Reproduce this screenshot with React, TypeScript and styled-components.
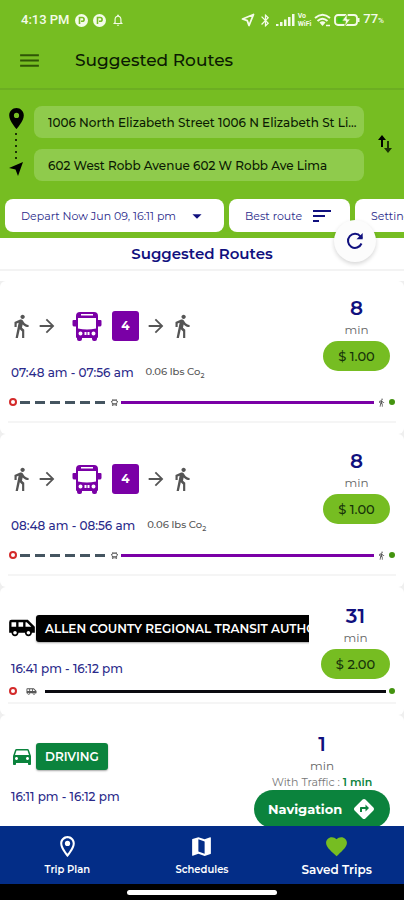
import React from "react";
import styled, { createGlobalStyle } from "styled-components";
import {
  MdAirportShuttle,
  MdArrowDropDown,
  MdArrowForward,
  MdBluetooth,
  MdDirections,
  MdDirectionsCar,
  MdDirectionsWalk,
  MdFavorite,
  MdLocationOn,
  MdMap,
  MdMenu,
  MdOutlineLocationOn,
  MdOutlineNotifications,
  MdSort,
} from "react-icons/md";

const color = {
  green: "#76bd22",
  greenLine: "#6cae22",
  field: "#8fcb4c",
  navy: "#10107e",
  bar: "#032d87",
  purple: "#7a00a6",
  drive: "#0b833d",
  grey: "#666",
  ink: "#0b1a02",
};

const GlobalStyle = createGlobalStyle`
  *, *::before, *::after { box-sizing: border-box; }
  body {
    margin: 0;
    background: #fff;
    font-family: Montserrat, Inter, sans-serif;
    color: ${color.navy};
  }
  button, input { font: inherit; color: inherit; border: 0; margin: 0; padding: 0; background: none; }
  button { cursor: pointer; }
  h1, h2, p { margin: 0; }
  svg { display: block; flex: none; }
`;

const Screen = styled.div`
  display: flex;
  flex-direction: column;
  height: 100vh;
  overflow: hidden;
`;

const Top = styled.header`
  flex: none;
  background: ${color.green};
  color: ${color.ink};
`;

const StatusBar = styled.div`
  display: flex;
  align-items: center;
  justify-content: space-between;
  height: 40px;
  padding: 0 20px 0 21px;
  color: #f4fbe9;
  font: 500 13px/16px Roboto, sans-serif;
`;

const StatusGroup = styled.div<{ $gap: number }>`
  display: flex;
  align-items: center;
  gap: ${(p) => p.$gap}px;
`;

const Percent = styled.small`
  font-size: 8px;
`;

const AppBar = styled.div`
  display: flex;
  align-items: center;
  gap: 33px;
  height: 50px;
  padding: 0 17px 8px;
  border-bottom: 2px solid ${color.greenLine};
`;

const MenuButton = styled.button`
  color: #2f5506;
`;

const AppTitle = styled.h1`
  font-size: 17px;
  line-height: 24px;
  font-weight: 500;
`;

const Places = styled.div`
  display: flex;
  align-items: center;
  padding: 16px 12px 18px 6px;
`;

const Markers = styled.div`
  display: flex;
  flex-direction: column;
  align-items: center;
  align-self: flex-start;
  width: 20px;
  margin-right: 8px;
`;

const Dots = styled.div`
  width: 2px;
  height: 26px;
  margin: 2px 0;
  background: repeating-linear-gradient(#1c3304 0 2px, transparent 2px 6px);
`;

const Fields = styled.div`
  display: flex;
  flex: 1;
  flex-direction: column;
  gap: 11px;
  min-width: 0;
`;

const Field = styled.input`
  width: 100%;
  height: 32px;
  padding: 0 4px 0 14px;
  border-radius: 8px;
  background: ${color.field};
  font-size: 12px;
  font-weight: 500;
  text-overflow: ellipsis;
`;

const SwapButton = styled.button`
  margin-left: 14px;
`;

const Chips = styled.div`
  display: flex;
  gap: 5px;
  padding: 0 0 6px 5px;
  overflow: hidden;
`;

const Chip = styled.button<{ $width: number }>`
  display: flex;
  flex: none;
  align-items: center;
  justify-content: space-between;
  width: ${(p) => p.$width}px;
  height: 33px;
  padding: 0 16px;
  border-radius: 8px;
  background: #fff;
  color: #2a2a8a;
  font-size: 11px;
`;

const ListHead = styled.div`
  position: relative;
  display: flex;
  flex: none;
  align-items: center;
  justify-content: center;
  height: 33px;
  border-bottom: 2px solid #f3f3f3;
  background: #fff;
`;

const ListTitle = styled.h2`
  font-size: 15px;
  line-height: 20px;
  font-weight: 600;
`;

const RefreshButton = styled.button`
  position: absolute;
  top: -18px;
  right: 28px;
  display: grid;
  place-items: center;
  width: 42px;
  height: 42px;
  border-radius: 50%;
  background: #fcfcfc;
  box-shadow: 0 2px 4px rgba(0, 0, 0, 0.16);
`;

const List = styled.main`
  flex: 1;
  min-height: 0;
  overflow: hidden;
  padding-top: 10px;
  background: linear-gradient(#fff 10px, #efefef 10px);
`;

const Card = styled.article<{ $compact?: boolean }>`
  padding: ${(p) => (p.$compact ? 17 : 15)}px 8px 11px;
  border-radius: 6px;
  background: #fff;
`;

const CardBody = styled.div`
  display: flex;
  justify-content: space-between;
  padding-right: 6px;
`;

const Summary = styled.div`
  flex: 1;
  min-width: 0;
`;

const Legs = styled.div<{ $tall?: boolean }>`
  display: flex;
  align-items: center;
  height: ${(p) => (p.$tall ? 59 : 48)}px;
  overflow: hidden;
`;

const WalkLegs = styled.div`
  display: flex;
  align-items: center;
  gap: 2px;
  color: #555;
`;

const BusLeg = styled.div`
  display: flex;
  align-items: center;
  gap: 10px;
  margin: 0 6px 0 14px;
  color: ${color.purple};
`;

const RouteNumber = styled.span`
  display: grid;
  place-items: center;
  width: 27px;
  height: 30px;
  border-radius: 3px;
  background: ${color.purple};
  color: #fff;
  font-size: 12px;
  font-weight: 700;
`;

const ModeIcon = styled.span<{ $color: string }>`
  display: grid;
  flex: none;
  place-items: center;
  width: 28px;
  color: ${(p) => p.$color};
`;

const ModeBadge = styled.span<{ $color: string; $clipped?: boolean }>`
  flex: none;
  height: 27px;
  padding: 0 9px;
  border-radius: ${(p) => (p.$clipped ? "3px 0 0 3px" : "3px")};
  background: ${(p) => p.$color};
  box-shadow: 0 1px 2px rgba(0, 0, 0, 0.35);
  color: #fff;
  font-size: 12px;
  line-height: 27px;
  font-weight: 600;
  white-space: nowrap;
`;

const Times = styled.p<{ $tall?: boolean }>`
  display: flex;
  align-items: center;
  gap: 12px;
  height: 18px;
  margin-top: ${(p) => (p.$tall ? 8 : 7)}px;
  padding-left: 3px;
  color: #2a2a8a;
  font-size: 12px;
  font-weight: 500;
`;

const Carbon = styled.span`
  color: #555;
  font-size: 10px;
  line-height: 12px;

  sub { font-size: 7px; line-height: 1; }
`;

const Cost = styled.div<{ $width: number }>`
  display: flex;
  flex: none;
  flex-direction: column;
  align-items: center;
  width: ${(p) => p.$width}px;
  margin-left: 12px;
`;

const Minutes = styled.strong`
  font-size: 20px;
  line-height: 24px;
  font-weight: 600;
`;

const Unit = styled.span`
  color: ${color.grey};
  font-size: 12px;
  line-height: 20px;
`;

const Fare = styled.span`
  width: 100%;
  margin-top: 1px;
  border-radius: 15px;
  background: ${color.green};
  color: #16330a;
  font-size: 13px;
  line-height: 30px;
  font-weight: 500;
  text-align: center;
`;

const Traffic = styled.span`
  color: #777;
  font-size: 11px;
  line-height: 12px;
  white-space: nowrap;

  b { color: ${color.drive}; font-weight: 600; }
`;

const NavigateButton = styled.button`
  display: flex;
  align-items: center;
  justify-content: space-between;
  width: 100%;
  height: 38px;
  margin-top: 2px;
  padding: 0 14px;
  border-radius: 19px;
  background: ${color.drive};
  color: #fff;
  font-size: 13px;
  font-weight: 700;
`;

const Track = styled.div<{ $tight?: boolean }>`
  display: flex;
  align-items: center;
  gap: 3px;
  height: 14px;
  margin-top: ${(p) => (p.$tight ? 5 : 14)}px;
  padding-right: 1px;
  color: #555;
`;

const Stop = styled.span<{ $width: number }>`
  display: grid;
  place-items: center;
  width: ${(p) => p.$width}px;
`;

const Start = styled.span`
  width: 8px;
  height: 8px;
  margin-left: 1px;
  border: 2px solid #d42a2a;
  border-radius: 50%;
`;

const End = styled.span`
  width: 6px;
  height: 6px;
  border-radius: 50%;
  background: #43930f;
`;

const Dashes = styled.span`
  width: 88px;
  height: 3px;
  background: repeating-linear-gradient(90deg, #455560 0 10px, transparent 10px 15px);
`;

const Line = styled.span<{ $color: string }>`
  flex: 1;
  height: 3px;
  background: ${(p) => p.$color};
`;

const Divider = styled.hr<{ $tight?: boolean }>`
  height: 2px;
  margin: ${(p) => (p.$tight ? 4 : 12)}px 0 0;
  border: 0;
  background: #f5f5f5;
`;

const BottomNav = styled.nav`
  display: grid;
  flex: none;
  grid-template-columns: repeat(3, 1fr);
  height: 58px;
  background: ${color.bar};
`;

const Tab = styled.a<{ $active?: boolean }>`
  display: flex;
  flex-direction: column;
  align-items: center;
  gap: 1px;
  padding-top: 8px;
  color: #fff;
  font-size: ${(p) => (p.$active ? 12 : 10)}px;
  line-height: 20px;
  font-weight: 600;
  text-decoration: none;

  svg { color: ${(p) => (p.$active ? color.green : "#fff")}; }
`;

const GestureBar = styled.div`
  display: grid;
  flex: none;
  place-items: center;
  height: 16px;
  background: #000;
`;

const Handle = styled.div`
  width: 37%;
  height: 5px;
  border-radius: 3px;
  background: #fff;
`;

const ParkIcon = () => (
  <svg width="13" height="13" viewBox="0 0 13 13">
    <circle cx="6.500" cy="6.500" r="6.500" fill="#f4fbe9" />
    <path d="M4.500 10V3.500H7.200a1.900 1.900 0 0 1 0 3.800H6" fill="none" stroke={color.green} strokeWidth="1.600" />
  </svg>
);

const SendIcon = () => (
  <svg width="14" height="14" viewBox="0 0 14 14">
    <path d="M12.500 1.500L8 12.500L6.300 7.700L1.500 6Z" fill="none" stroke="currentColor" strokeWidth="1.800" strokeLinejoin="round" />
  </svg>
);

const SignalIcon = () => (
  <svg width="19" height="14" viewBox="0 0 19 14" fill="currentColor">
    <rect x="0" y="11" width="2.500" height="2" />
    <rect x="4" y="9" width="2.500" height="4" />
    <rect x="8" y="6.500" width="2.500" height="6.500" />
    <rect x="12" y="4" width="2.500" height="9" />
    <rect x="16" y="1" width="2.500" height="12" />
  </svg>
);

const VoWifi = styled.span`
  display: flex;
  flex-direction: column;
  font-size: 7px;
  line-height: 8px;
  font-weight: 700;
`;

const WifiIcon = () => (
  <svg width="17" height="14" viewBox="0 0 17 14" fill="none" stroke="currentColor" strokeWidth="2">
    <path d="M1 5Q8.500 -1.500 16 5M3.500 8Q8.500 3.500 13.500 8" />
    <path d="M5.500 9.500Q8.500 7 11.500 9.500L8.500 13Z" fill="currentColor" stroke="none" />
    <path d="M12 12.500h4" strokeWidth="1.500" />
  </svg>
);

const BatteryIcon = () => (
  <svg width="26" height="14" viewBox="0 0 26 14">
    <rect x="1" y="2" width="22" height="10" rx="3" fill="none" stroke="currentColor" strokeWidth="1.800" />
    <rect x="3.500" y="4.500" width="6" height="5" fill="#3fc41d" />
    <path d="M24.500 5v4" stroke="currentColor" strokeWidth="2" />
    <path d="M13.500 0L8 8h3.500L10.500 14L16.500 6H13Z" fill="currentColor" stroke={color.green} strokeWidth="0.800" />
  </svg>
);

const ArrowheadIcon = () => (
  <svg width="16" height="16" viewBox="0 0 16 16">
    <path d="M15 1L10 15L7.500 8.500L1 7Z" fill="#000" />
  </svg>
);

const SwapIcon = () => (
  <svg width="14" height="18" viewBox="0 0 14 18">
    <path d="M3 12V5H0L4 0L8 5H5V12Z" fill="#000" />
    <path d="M9 6V13H6L10 18L14 13H11V6Z" fill="#1c3304" />
  </svg>
);

const RefreshIcon = () => (
  <svg width="20" height="20" viewBox="0 0 20 20" fill="none" stroke={color.navy} strokeWidth="2">
    <path d="M16.500 12.500A7 7 0 1 1 15.500 5.500L17 7" />
    <path d="M17.700 2V8.200H11.500Z" fill={color.navy} stroke="none" />
  </svg>
);

const BusIcon = ({ size }: { size: number }) => (
  <svg width={size} height={size} viewBox="0 0 30 30">
    <path
      fill="currentColor"
      fillRule="evenodd"
      d="M8 1H22Q26 1 26 5V9H28.500Q29.500 9 29.500 10V14Q29.500 15.500 27.500 15.500H26V26Q26 27 25 27V28Q25 30 23 30H22Q20 30 20 28V27H10V28Q10 30 8 30H7Q5 30 5 28V27Q4 27 4 26V15.500H2.500Q.5 15.500 .5 14V10Q.5 9 1.500 9H4V5Q4 1 8 1ZM9 3V4.500H21V3ZM6 7V17.500Q15 19.500 24 17.500V7ZM8.500 20.500A2 2 0 1 0 8.500 24.500A2 2 0 1 0 8.500 20.500ZM21.500 20.500A2 2 0 1 0 21.500 24.500A2 2 0 1 0 21.500 20.500ZM12.500 21V24H14.500V21ZM15.500 21V24H17.500V21Z"
    />
  </svg>
);

const BusCard = ({ times }: { times: string }) => (
  <Card>
    <CardBody>
      <Summary>
        <Legs $tall>
          <WalkLegs>
            <MdDirectionsWalk size={26} />
            <MdArrowForward size={22} />
          </WalkLegs>
          <BusLeg>
            <BusIcon size={30} />
            <RouteNumber>4</RouteNumber>
          </BusLeg>
          <WalkLegs>
            <MdArrowForward size={22} />
            <MdDirectionsWalk size={26} />
          </WalkLegs>
        </Legs>
        <Times $tall>
          {times}
          <Carbon>
            0.06 lbs Co<sub>2</sub>
          </Carbon>
        </Times>
      </Summary>
      <Cost $width={67}>
        <Minutes>8</Minutes>
        <Unit>min</Unit>
        <Fare>$ 1.00</Fare>
      </Cost>
    </CardBody>
    <Track>
      <Start />
      <Dashes />
      <BusIcon size={7} />
      <Line $color={color.purple} />
      <MdDirectionsWalk size={9} />
      <End />
    </Track>
    <Divider />
  </Card>
);

export default function App() {
  return (
    <>
      <GlobalStyle />
      <Screen>
        <Top>
          <StatusBar>
            <StatusGroup $gap={5}>
              <span>4:13 PM</span>
              <ParkIcon />
              <ParkIcon />
              <MdOutlineNotifications size={14} />
            </StatusGroup>
            <StatusGroup $gap={3}>
              <SendIcon />
              <MdBluetooth size={15} />
              <SignalIcon />
              <VoWifi>
                <span>Vo</span>
                <span>WiFi</span>
              </VoWifi>
              <WifiIcon />
              <BatteryIcon />
              <span>
                77<Percent>%</Percent>
              </span>
            </StatusGroup>
          </StatusBar>
          <AppBar>
            <MenuButton aria-label="Menu">
              <MdMenu size={25} />
            </MenuButton>
            <AppTitle>Suggested Routes</AppTitle>
          </AppBar>
          <Places>
            <Markers>
              <MdLocationOn size={25} color="#000" />
              <Dots />
              <ArrowheadIcon />
            </Markers>
            <Fields>
              <Field aria-label="From" defaultValue="1006 North Elizabeth Street 1006 N Elizabeth St Li..." />
              <Field aria-label="To" defaultValue="602 West Robb Avenue 602 W Robb Ave Lima" />
            </Fields>
            <SwapButton aria-label="Swap places">
              <SwapIcon />
            </SwapButton>
          </Places>
          <Chips>
            <Chip $width={219}>
              Depart Now Jun 09, 16:11 pm
              <MdArrowDropDown size={22} color={color.navy} />
            </Chip>
            <Chip $width={121}>
              Best route
              <MdSort size={24} color={color.navy} />
            </Chip>
            <Chip $width={110}>Settings</Chip>
          </Chips>
        </Top>
        <ListHead>
          <ListTitle>Suggested Routes</ListTitle>
          <RefreshButton aria-label="Refresh">
            <RefreshIcon />
          </RefreshButton>
        </ListHead>
        <List>
          <BusCard times="07:48 am - 07:56 am" />
          <BusCard times="08:48 am - 08:56 am" />
          <Card $compact>
            <CardBody>
              <Summary>
                <Legs>
                  <ModeIcon $color="#000">
                    <MdAirportShuttle size={28} />
                  </ModeIcon>
                  <ModeBadge $color="#000" $clipped>
                    ALLEN COUNTY REGIONAL TRANSIT AUTHORITY
                  </ModeBadge>
                </Legs>
                <Times>16:41 pm - 16:12 pm</Times>
              </Summary>
              <Cost $width={69}>
                <Minutes>31</Minutes>
                <Unit>min</Unit>
                <Fare>$ 2.00</Fare>
              </Cost>
            </CardBody>
            <Track $tight>
              <Start />
              <Stop $width={22}>
                <MdAirportShuttle size={11} />
              </Stop>
              <Line $color="#0a0a10" />
              <End />
            </Track>
            <Divider $tight />
          </Card>
          <Card $compact>
            <CardBody>
              <Summary>
                <Legs>
                  <ModeIcon $color={color.drive}>
                    <MdDirectionsCar size={24} />
                  </ModeIcon>
                  <ModeBadge $color={color.drive}>DRIVING</ModeBadge>
                </Legs>
                <Times>16:11 pm - 16:12 pm</Times>
              </Summary>
              <Cost $width={136}>
                <Minutes>1</Minutes>
                <Unit>min</Unit>
                <Traffic>
                  With Traffic : <b>1 min</b>
                </Traffic>
                <NavigateButton>
                  Navigation
                  <MdDirections size={24} />
                </NavigateButton>
              </Cost>
            </CardBody>
          </Card>
        </List>
        <BottomNav>
          <Tab href="#plan">
            <MdOutlineLocationOn size={25} />
            Trip Plan
          </Tab>
          <Tab href="#schedules">
            <MdMap size={25} />
            Schedules
          </Tab>
          <Tab href="#saved" $active>
            <MdFavorite size={25} />
            Saved Trips
          </Tab>
        </BottomNav>
        <GestureBar>
          <Handle />
        </GestureBar>
      </Screen>
    </>
  );
}
